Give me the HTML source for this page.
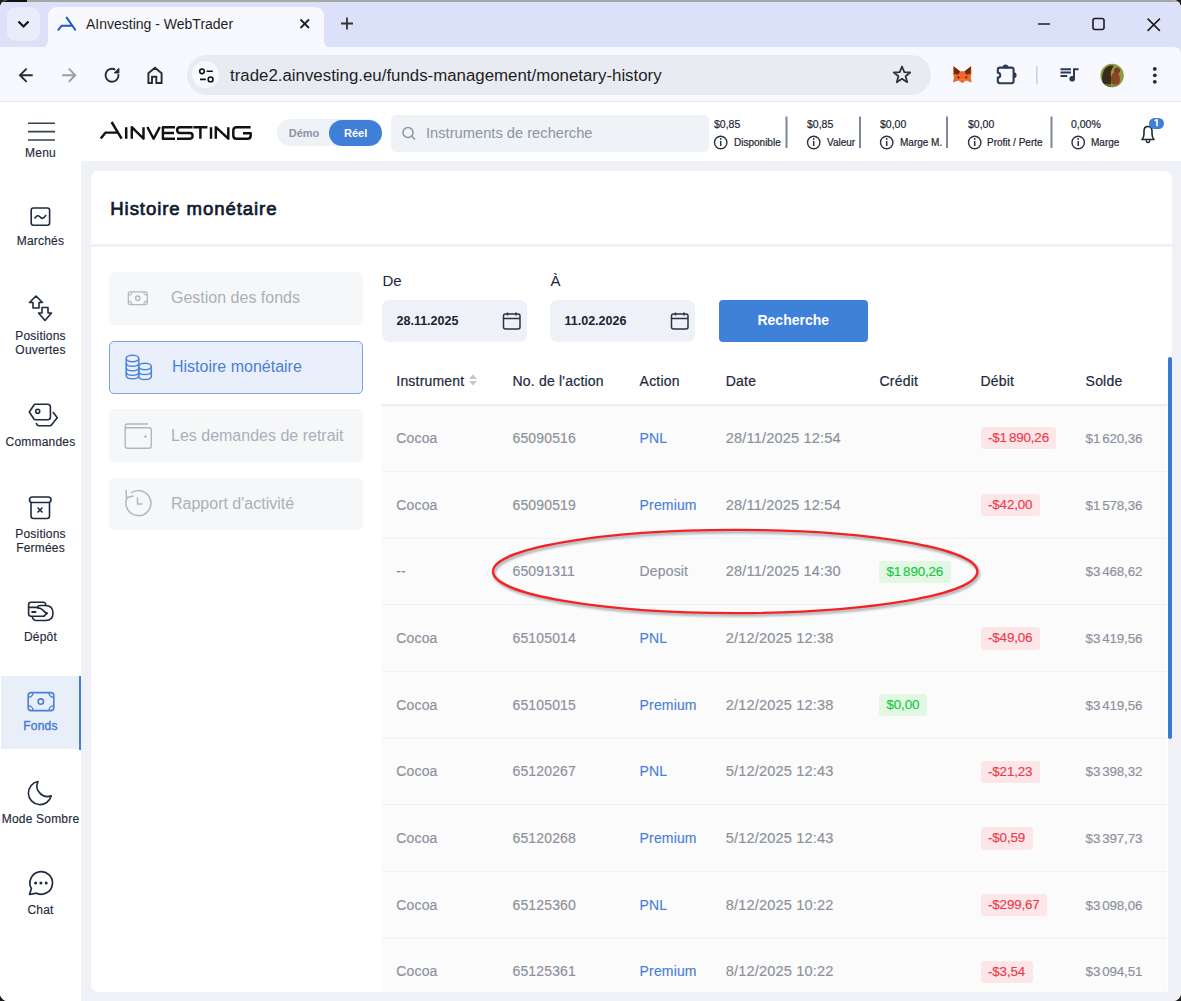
<!DOCTYPE html>
<html><head><meta charset="utf-8">
<style>
*{box-sizing:border-box;margin:0;padding:0}
html,body{width:1181px;height:1001px;overflow:hidden;background:#1c1c1c}
body{font-family:"Liberation Sans",sans-serif;position:relative}
.a{position:absolute}
svg{position:absolute;overflow:visible}
#win{position:absolute;left:0;top:0;width:1181px;height:1001px;overflow:hidden;border-radius:8px 8px 8px 8px;background:#fff}
#tabstrip{left:0;top:0;width:1181px;height:48px;background:#dae1f8;border-top:2px solid #8d8f94}
#toolbar{left:0;top:47px;width:1181px;height:55px;background:#f8f9fe;border-bottom:1px solid #e3e5ea}
#page{left:0;top:103px;width:1181px;height:898px;background:#eff3f9}
.t{white-space:nowrap;position:absolute}
.st{position:absolute;top:118px;-webkit-text-stroke:0.2px currentColor;font-size:10.5px;line-height:12px;color:#1d2433;white-space:nowrap}
.sl{position:absolute;top:137px;-webkit-text-stroke:0.2px currentColor;font-size:10px;line-height:12px;color:#1d2433;white-space:nowrap}
.mi{position:absolute;font-size:16px;line-height:18px;white-space:nowrap}
.th{position:absolute;top:373px;font-size:14px;line-height:17px;color:#1d2840;white-space:nowrap;letter-spacing:0.2px;-webkit-text-stroke:0.2px currentColor}
.td{position:absolute;font-size:14px;line-height:17px;color:#8b909b;white-space:nowrap;letter-spacing:0.15px;-webkit-text-stroke:0.15px currentColor}
.dt{font-size:14.6px}
.am{font-size:13.4px;letter-spacing:-0.15px}
.ts{display:inline-block;width:2px}
.bg,.br{position:absolute;height:22.4px;padding:0 7.5px;font-size:13.4px;letter-spacing:-0.15px;-webkit-text-stroke:0.15px currentColor;line-height:22.4px;border-radius:3px;white-space:nowrap}
.bg{background:#e3f7e5;color:#16c93b}
.br{background:#fde6e8;color:#ec3a4c}
.sb{position:absolute;left:0;width:81px;text-align:center;font-size:12px;line-height:14px;color:#1f2940;white-space:nowrap;margin-top:-1px;-webkit-text-stroke:0.15px currentColor;letter-spacing:0.2px}
</style></head>
<body>
<div id="win">
  <!-- TAB STRIP -->
  <div class="a" style="left:0;top:0;width:1181px;height:48px;background:#dae1f8"></div>
  <div class="a" style="left:0;top:0;width:1181px;height:2px;background:#a6a8a7"></div>
  <div class="a" style="left:0;top:0;width:27px;height:2px;background:#111"></div>
  <!-- dropdown btn -->
  <div class="a" style="left:7px;top:7px;width:33px;height:34px;border-radius:9px;background:#e9edfb"></div>
  <svg style="left:0;top:0" width="60" height="48"><path d="M18.5 21.5 L23.5 26.5 L28.5 21.5" fill="none" stroke="#111" stroke-width="2.2"/></svg>
  <!-- active tab -->
  <div class="a" style="left:48px;top:7px;width:276px;height:41px;border-radius:9px 9px 0 0;background:#f8f9fe"></div>
  <svg style="left:0;top:0" width="400" height="48">
    <path d="M40 48 Q48 48 48 40 L48 48 Z" fill="#f8f9fe"/>
    <path d="M324 40 Q324 48 332 48 L324 48 Z" fill="#f8f9fe"/>
    <path d="M58.3 29.8 L61.7 25.7 L71.8 25.7 M66.7 17.6 L75.2 29.8" fill="none" stroke="#1f5bc6" stroke-width="2" stroke-linecap="round" stroke-linejoin="round"/>
    <path d="M300.5 19.5 L309 28 M309 19.5 L300.5 28" stroke="#1f1f1f" stroke-width="1.8"/>
    <path d="M341 23.5 L353 23.5 M347 17.5 L347 29.5" stroke="#333" stroke-width="1.8"/>
    <path d="M1038 24 L1050 24" stroke="#1f1f1f" stroke-width="1.6"/>
    <rect x="1093" y="18.5" width="11" height="11" rx="2" fill="none" stroke="#1f1f1f" stroke-width="1.6"/>
    <path d="M1147.6 18.6 L1159.9 30.9 M1159.9 18.6 L1147.6 30.9" stroke="#1f1f1f" stroke-width="1.6"/>
  </svg>
  <div class="t" style="left:86px;top:16px;font-size:14px;color:#1f1f1f;line-height:16px">AInvesting - WebTrader</div>

  <!-- TOOLBAR -->
  <div class="a" style="left:0;top:47px;width:1181px;height:55px;background:#f8f9fe"></div>
  <div class="a" style="left:0;top:101px;width:1181px;height:1.5px;background:#e4e6eb"></div>
  <svg style="left:0;top:0" width="1181" height="60"><path d="M1174 47 L1181 47 L1181 54 Q1181 47 1174 47 Z" fill="#dae1f8"/></svg>
  <svg style="left:0;top:0" width="1181" height="110">
    <!-- back -->
    <path d="M32.7 75.2 L20 75.2 M26.6 68.6 L20 75.2 L26.6 81.8" fill="none" stroke="#262b36" stroke-width="1.9"/>
    <path d="M62.2 75.2 L75.2 75.2 M68.8 68.6 L75.2 75.2 L68.8 81.8" fill="none" stroke="#9a9da5" stroke-width="1.9"/>
    <!-- reload -->
    <path d="M118.4 74.2 A6.5 6.5 0 1 1 115.3 69.7" fill="none" stroke="#262b36" stroke-width="1.9"/>
    <path d="M114.3 73 L118.9 68.3 L118.9 73 Z" fill="#262b36" stroke="#262b36" stroke-width="1" stroke-linejoin="round"/>
    <!-- home -->
    <path d="M148.4 83 L148.4 73.3 L155 67.8 L161.6 73.3 L161.6 83 L156.3 83 L156.3 76.8 L152 76.8 L152 83 Z" fill="none" stroke="#262b36" stroke-width="1.9" stroke-linejoin="miter"/>
  </svg>
  <!-- omnibox -->
  <div class="a" style="left:187px;top:55px;width:744px;height:40px;border-radius:20px;background:#e9ebf3"></div>
  <div class="a" style="left:191.9px;top:61.3px;width:27.2px;height:27.2px;border-radius:14px;background:#f8f9fe"></div>
  <svg style="left:0;top:0" width="1181" height="110">
    <circle cx="202" cy="71.3" r="2.3" fill="none" stroke="#111" stroke-width="1.6"/>
    <path d="M206.6 71.3 L212.8 71.3 M200 79.4 L205.8 79.4" stroke="#111" stroke-width="1.6"/>
    <circle cx="210.6" cy="79.4" r="2.4" fill="none" stroke="#111" stroke-width="1.6"/>
    <!-- star -->
    <path d="M902 66.5 L904.3 72.2 L910.2 72.5 L905.6 76.3 L907.2 82.2 L902 78.8 L896.8 82.2 L898.4 76.3 L893.8 72.5 L899.7 72.2 Z" fill="none" stroke="#333" stroke-width="1.8" stroke-linejoin="round"/>
    <!-- fox -->
    <path d="M953.5 66.3 L960 71.2 L964.6 71.2 L971.1 66.3 L971.6 73.5 L970.6 77 L971.6 82.6 L966.2 80.6 L962.3 83 L958.4 80.6 L953 82.6 L954 77 L953 73.5 Z" fill="#f0662a"/>
    <path d="M953.5 66.3 L960 71.2 L958.5 74.5 L954.2 74 Z M971.1 66.3 L964.6 71.2 L966.1 74.5 L970.4 74 Z" fill="#6e2c0f"/>
    <path d="M957 76.2 L960 77.5 L958.2 78.4 Z M967.6 76.2 L964.6 77.5 L966.4 78.4 Z M961 80.3 L963.6 80.3 L962.3 82 Z" fill="#3a1a0a"/>
    <path d="M958.4 80.6 L962.3 78.5 L966.2 80.6 L962.3 83 Z" fill="#f58a4a" opacity=".6"/>
    <!-- puzzle -->
    <path d="M1000 67.6 L1011.4 67.6 Q1013.6 67.6 1013.6 69.8 L1013.6 81 Q1013.6 83.2 1011.4 83.2 L1000 83.2 Q997.8 83.2 997.8 81 L997.8 77.6 A2.4 2.4 0 0 0 997.8 72.8 L997.8 69.8 Q997.8 67.6 1000 67.6 Z" fill="none" stroke="#2b3a55" stroke-width="2.1" stroke-linejoin="round"/>
    <path d="M1003.2 67.6 A2.4 2.4 0 0 1 1008 67.6 Z M1013.6 72.8 A2.4 2.4 0 0 1 1013.6 77.6 Z" fill="#2b3a55" stroke="#2b3a55" stroke-width="1.2"/>
    <path d="M1036.8 66 L1036.8 84.5" stroke="#c6d4ef" stroke-width="1.6"/>
    <!-- media -->
    <path d="M1060.5 69.2 L1071 69.2 M1060.5 72.6 L1071 72.6 M1060.5 76.1 L1067.2 76.1" stroke="#2b3a55" stroke-width="2"/>
    <path d="M1074 79 L1074 69.2 L1078.6 69.2" fill="none" stroke="#2b3a55" stroke-width="2"/>
    <circle cx="1072.2" cy="78.8" r="2.8" fill="#2b3a55"/>
    <!-- avatar -->
    <defs><clipPath id="av"><circle cx="1112.1" cy="75.5" r="11.7"/></clipPath></defs>
    <circle cx="1112.1" cy="75.5" r="11.7" fill="#8e9c46"/>
    <g clip-path="url(#av)">
      <path d="M1104 87 Q1100 78 1104 70 Q1108 64 1114 66 Q1110 70 1111 77 Q1112 84 1110 88 Z" fill="#3a2a18"/>
      <ellipse cx="1115.5" cy="79" rx="4.5" ry="7" fill="#8a4522"/>
      <circle cx="1117" cy="70.5" r="3" fill="#7a3d1e"/>
      <path d="M1100 84 L1124 84 L1124 90 L1100 90 Z" fill="#7d8f3a" opacity=".7"/>
    </g>
    <!-- menu -->
    <circle cx="1154.8" cy="68.9" r="1.9" fill="#222b3b"/>
    <circle cx="1154.8" cy="75.3" r="1.9" fill="#222b3b"/>
    <circle cx="1154.8" cy="81.8" r="1.9" fill="#222b3b"/>
  </svg>
  <div class="t" style="left:230px;top:66px;font-size:16.85px;color:#1f1f1f;line-height:20px">trade2.ainvesting.eu/funds-management/monetary-history</div>
  <!-- WEB PAGE -->
  <div class="a" style="left:0;top:102px;width:1181px;height:899px;background:#eff1f6"></div>
  <!-- header -->
  <div class="a" style="left:0;top:102px;width:1181px;height:59px;background:#fff"></div>
  <!-- sidebar -->
  <div class="a" style="left:0;top:102px;width:81px;height:899px;background:#fff"></div>
  <div class="a" style="left:1px;top:676px;width:79px;height:73px;background:#e9eff9"></div>
  <div class="a" style="left:78.8px;top:675.5px;width:1.8px;height:74px;background:#3f7fd6"></div>
  <svg style="left:0;top:0" width="90" height="1001">
    <path d="M28 123.3 L55 123.3 M28 131.6 L55 131.6 M28 140 L55 140" stroke="#3a4150" stroke-width="1.6"/>
    <!-- marches -->
    <rect x="31.2" y="208" width="18.4" height="17.2" rx="2.2" fill="none" stroke="#1f2a3c" stroke-width="1.6"/>
    <path d="M35 218 Q37.5 214 40.2 217 Q42.5 220.5 45.8 215.4" fill="none" stroke="#1f2a3c" stroke-width="1.6" stroke-linecap="round"/>
    <!-- positions ouvertes -->
    <path d="M36 296 L29.5 302.5 L33 302.5 L33 308 L39 308 L39 302.5 L42.5 302.5 Z" fill="none" stroke="#1f2a3c" stroke-width="1.6" stroke-linejoin="round"/>
    <path d="M42 307.5 L42 313 L38.5 313 L45 320.5 L51.5 313 L48 313 L48 307.5 Z" fill="none" stroke="#1f2a3c" stroke-width="1.6" stroke-linejoin="round"/>
    <!-- commandes -->
    <g fill="none" stroke="#1f2a3c" stroke-width="1.6" stroke-linecap="round" stroke-linejoin="round">
      <path d="M34.9 404.3 L47.6 404.3 Q50.4 404.3 50.4 407.1 L50.4 417 Q50.4 419.8 47.6 419.8 L35.5 419.8 Q34.5 419.8 33.8 418.8 L29.3 412 L33.8 405.3 Q34.3 404.3 34.9 404.3 Z"/>
      <circle cx="37.7" cy="411.2" r="2"/>
      <path d="M36.4 423.5 Q37 425.7 39 425.7 L50 425.7 Q51 425.7 51.6 424.8 L57.3 417.7 L53.3 412.5"/>
    </g>
    <!-- positions fermees -->
    <rect x="29.5" y="497" width="21.5" height="5.5" rx="2.7" fill="none" stroke="#1f2a3c" stroke-width="1.6"/>
    <path d="M31 503 L31 516 Q31 518.5 33.5 518.5 L47 518.5 Q49.5 518.5 49.5 516 L49.5 503" fill="none" stroke="#1f2a3c" stroke-width="1.6"/>
    <path d="M37.5 507.5 L42.5 512.5 M42.5 507.5 L37.5 512.5" stroke="#1f2a3c" stroke-width="1.5"/>
    <!-- depot -->
    <g fill="none" stroke="#1f2a3c" stroke-width="1.6" stroke-linecap="round" stroke-linejoin="round">
      <path d="M45.9 605.1 Q45.5 602.2 43.5 602.2 L31 602.2 Q28.6 602.2 28.6 604.6 L28.6 613.8 Q28.6 616.2 31 616.2 L44.1 616.2"/>
      <path d="M28.6 607.4 L37.5 607.4"/>
      <path d="M37.5 607.4 Q38 605.5 40 605.5 L45.2 605.5 Q53 605.5 53 613 Q53 620.5 45.5 620.5 L36 620.5 Q33 620.5 32.2 616.7"/>
      <path d="M37.8 607.9 Q41 608 42.7 610 Q44.5 612.5 47.3 613.2 Q45 614.5 44.1 616.2"/>
      <path d="M32.2 612 L35.5 612" stroke-width="2"/>
    </g>
    <!-- fonds -->
    <g fill="none" stroke="#4a80d4" stroke-width="1.6">
      <rect x="28.2" y="692.6" width="25.6" height="18" rx="2.8"/>
      <circle cx="40.8" cy="701.6" r="2.7"/>
      <path d="M28.2 697.4 A4.8 4.8 0 0 0 33 692.6 M53.8 697.4 A4.8 4.8 0 0 1 49 692.6 M28.2 705.8 A4.8 4.8 0 0 1 33 710.6 M53.8 705.8 A4.8 4.8 0 0 0 49 710.6" stroke-width="1.4"/>
    </g>
    <!-- moon -->
    <path d="M37.98 781.58 A11.6 11.6 0 1 0 51.26 795.8 A10.5 10.5 0 0 1 37.98 781.58 Z" fill="none" stroke="#1f2a3c" stroke-width="1.6" stroke-linejoin="round"/>
    <!-- chat -->
    <path d="M36.4 893.2 A11.3 11.3 0 1 0 31.4 888.6 L29.5 894.5 Z" fill="none" stroke="#1f2a3c" stroke-width="1.7" stroke-linejoin="round"/>
    <circle cx="35.6" cy="883.1" r="1.5" fill="#1f2a3c"/>
    <circle cx="40.9" cy="883.1" r="1.5" fill="#1f2a3c"/>
    <circle cx="46.2" cy="883.1" r="1.5" fill="#1f2a3c"/>
  </svg>
  <!-- HEADER -->
  <svg style="left:0;top:0" width="260" height="160">
    <g fill="none" stroke="#111" stroke-width="2.45" stroke-linejoin="round">
      <path d="M100.8 138.6 L105.6 132.6 L117.5 132.6 M111.6 122 L121.6 138.6"/>
      <path d="M126.2 127.2 L126.2 138.7"/>
      <path d="M131.8 138.7 L131.8 127.2 L143.5 138.7 L143.5 127.2"/>
      <path d="M147.4 127 L153.6 138.7 L159.8 127"/>
      <path d="M175 127.2 L162.9 127.2 L162.9 138.7 L175 138.7 M162.9 133 L174 133"/>
      <path d="M192.6 127.2 L179.8 127.2 Q177.2 127.2 177.2 130 Q177.2 133 180 133 L190 133 Q192.6 133 192.6 135.8 Q192.6 138.7 190 138.7 L177 138.7"/>
      <path d="M193.4 127.2 L207.4 127.2 M200.4 127.2 L200.4 138.7"/>
      <path d="M211 127.2 L211 138.7"/>
      <path d="M215.8 138.7 L215.8 127.2 L228.3 138.7 L228.3 127.2"/>
      <path d="M250.6 127.2 L236.6 127.2 Q233.3 127.2 233.3 130.5 L233.3 135.4 Q233.3 138.7 236.6 138.7 L247.5 138.7 Q250.7 138.7 250.7 135.4 L250.7 133.2 L243 133.2"/>
    </g>
  </svg>
  <!-- toggle -->
  <div class="a" style="left:277px;top:119px;width:105px;height:27px;border-radius:14px;background:#eef1f6"></div>
  <div class="a" style="left:329px;top:119.5px;width:53px;height:26px;border-radius:13px;background:#3f7fd8"></div>
  <div class="t" style="left:288.7px;top:126px;font-size:11px;font-weight:bold;color:#8a94a6;line-height:14px">Démo</div>
  <div class="t" style="left:344px;top:126px;font-size:11px;font-weight:bold;color:#fff;line-height:14px">Réel</div>
  <!-- search -->
  <div class="a" style="left:391px;top:115px;width:318px;height:37px;border-radius:5px;background:#eff2f7"></div>
  <svg style="left:0;top:0" width="1181" height="160">
    <circle cx="408" cy="132.5" r="5" fill="none" stroke="#8a93a3" stroke-width="1.5"/>
    <path d="M411.8 136.3 L415 139.5" stroke="#8a93a3" stroke-width="1.5"/>
  </svg>
  <div class="t" style="left:426px;top:125px;font-size:14.7px;line-height:17px;color:#8d95a3">Instruments de recherche</div>
  <!-- stats -->
  <div class="st" style="left:714px">$0,85</div>
  <div class="st" style="left:807px">$0,85</div>
  <div class="st" style="left:880px">$0,00</div>
  <div class="st" style="left:968px">$0,00</div>
  <div class="st" style="left:1071px">0,00%</div>
  <div class="sl" style="left:734px">Disponible</div>
  <div class="sl" style="left:827px">Valeur</div>
  <div class="sl" style="left:900px">Marge M.</div>
  <div class="sl" style="left:987px">Profit / Perte</div>
  <div class="sl" style="left:1091px">Marge</div>
  <svg style="left:0;top:0" width="1181" height="160">
    <g fill="none" stroke="#2a3244" stroke-width="1.4">
      <circle cx="720.7" cy="142.5" r="6.2"/>
      <circle cx="813.7" cy="142.5" r="6.2"/>
      <circle cx="886.7" cy="142.5" r="6.2"/>
      <circle cx="974.7" cy="142.5" r="6.2"/>
      <circle cx="1078.2" cy="142.5" r="6.2"/>
    </g>
    <g stroke="#2a3244" stroke-width="1.5">
      <path d="M720.7 141 L720.7 146 M813.7 141 L813.7 146 M886.7 141 L886.7 146 M974.7 141 L974.7 146 M1078.2 141 L1078.2 146"/>
    </g>
    <g fill="#2a3244">
      <circle cx="720.7" cy="139" r=".9"/><circle cx="813.7" cy="139" r=".9"/><circle cx="886.7" cy="139" r=".9"/><circle cx="974.7" cy="139" r=".9"/><circle cx="1078.2" cy="139" r=".9"/>
    </g>
    <g stroke="#7d8799" stroke-width="2">
      <path d="M786.5 116.5 L786.5 148 M860 116.5 L860 148 M947 116.5 L947 148 M1051.5 116.5 L1051.5 148"/>
    </g>
    <!-- bell -->
    <path d="M1142 139.5 L1154 139.5 Q1152 137.5 1152 134 L1152 131 Q1152 126.5 1148 126.5 Q1144 126.5 1144 131 L1144 134 Q1144 137.5 1142 139.5 Z" fill="none" stroke="#1d2433" stroke-width="1.6" stroke-linejoin="round"/>
    <path d="M1146.3 140.3 Q1146.3 142.6 1148 142.6 Q1149.7 142.6 1149.7 140.3" fill="none" stroke="#1d2433" stroke-width="1.4"/>
  </svg>
  <div class="a" style="left:1149px;top:117.5px;width:15px;height:11px;border-radius:6px;background:#3f7fd8"></div>
  <svg style="left:0;top:0" width="1181" height="160"><path d="M1154.6 120.8 L1157 119.6 L1157 126.2" fill="none" stroke="#fff" stroke-width="1.6" stroke-linejoin="round"/></svg>
  <!-- CARD -->
  <div class="a" style="left:91px;top:170.5px;width:1080.5px;height:821.5px;border-radius:7px;background:#fff"></div>
  <div class="a" style="left:91px;top:243.5px;width:1080.5px;height:3px;background:#eef2f7"></div>
  <div class="t" style="left:110.3px;top:198px;font-size:18.6px;line-height:22px;color:#111a2e;letter-spacing:0.9px;-webkit-text-stroke:0.7px #111a2e">Histoire monétaire</div>
  <!-- left menu -->
  <div class="a" style="left:109px;top:272px;width:254px;height:52.5px;border-radius:5px;background:#f6f7f9"></div>
  <div class="a" style="left:108.5px;top:340.5px;width:254.5px;height:53px;border-radius:5px;background:#e9f0fb;border:1.6px solid #7aa5e6"></div>
  <div class="a" style="left:109px;top:409px;width:254px;height:52.5px;border-radius:5px;background:#f6f7f9"></div>
  <div class="a" style="left:109px;top:477.5px;width:254px;height:52.5px;border-radius:5px;background:#f6f7f9"></div>
  <div class="mi" style="left:171px;top:289px;color:#abafb9">Gestion des fonds</div>
  <div class="mi" style="left:172px;top:358px;color:#4a7fd4">Histoire monétaire</div>
  <div class="mi" style="left:171px;top:426.5px;color:#abafb9">Les demandes de retrait</div>
  <div class="mi" style="left:171px;top:495px;color:#abafb9">Rapport d'activité</div>
  <svg style="left:0;top:0" width="400" height="560">
    <!-- banknote -->
    <g fill="none" stroke="#b3b7c0" stroke-width="1.3">
      <rect x="128.3" y="291.8" width="19" height="12.8" rx="2"/>
      <circle cx="137.8" cy="298.2" r="2.2"/>
      <path d="M128.3 295.3 A3.5 3.5 0 0 0 131.8 291.8 M147.3 295.3 A3.5 3.5 0 0 1 143.8 291.8 M128.3 301.1 A3.5 3.5 0 0 1 131.8 304.6 M147.3 301.1 A3.5 3.5 0 0 0 143.8 304.6" stroke-width="1.1"/>
    </g>
    <!-- coins -->
    <g fill="none" stroke="#4f86d8" stroke-width="1.5">
      <ellipse cx="132.5" cy="358.5" rx="6.3" ry="3.2"/>
      <path d="M126.2 358.5 L126.2 375.5 Q126.2 378.8 132.5 378.8 Q138.8 378.8 138.8 375.5 L138.8 358.5"/>
      <path d="M126.2 363 Q126.2 366.3 132.5 366.3 Q138.8 366.3 138.8 363 M126.2 367.5 Q126.2 370.8 132.5 370.8 Q138.8 370.8 138.8 367.5 M126.2 372 Q126.2 375.3 132.5 375.3 Q138.8 375.3 138.8 372"/>
      <ellipse cx="145" cy="366.5" rx="6.3" ry="3.2"/>
      <path d="M138.8 366.5 L138.8 376.3 Q138.8 379.6 145 379.6 Q151.3 379.6 151.3 376.3 L151.3 366.5"/>
      <path d="M138.8 371.2 Q138.8 374.5 145 374.5 Q151.3 374.5 151.3 371.2"/>
    </g>
    <!-- wallet -->
    <g fill="none" stroke="#b3b7c0" stroke-width="1.4">
      <path d="M148 424 L127.5 424 Q125.2 424 125.2 426.3 L125.2 446 Q125.2 448.3 127.5 448.3 L149 448.3 Q151.3 448.3 151.3 446 L151.3 430 Q151.3 427.8 149 427.8 L125.2 427.8"/>
      <circle cx="145.5" cy="436.5" r=".6" fill="#b3b7c0"/>
    </g>
    <!-- history -->
    <g fill="none" stroke="#b3b7c0" stroke-width="1.5">
      <path d="M127.2 497.5 A12.5 12.5 0 1 0 131 493"/>
      <path d="M126 490 L126.5 497.8 L133.5 496"/>
      <path d="M137.5 497.5 L137.5 504 L142.5 504"/>
    </g>
  </svg>
  <!-- filters -->
  <div class="t" style="left:382.5px;top:272px;font-size:15px;line-height:18px;color:#1a2540">De</div>
  <div class="t" style="left:550.5px;top:272px;font-size:15px;line-height:18px;color:#1a2540">À</div>
  <div class="a" style="left:382px;top:300px;width:145px;height:41.5px;border-radius:7px;background:#eef2f8"></div>
  <div class="a" style="left:550px;top:300px;width:145px;height:41.5px;border-radius:7px;background:#eef2f8"></div>
  <div class="t" style="left:396.5px;top:314px;font-size:12.5px;line-height:15px;font-weight:bold;color:#1b2232">28.11.2025</div>
  <div class="t" style="left:564.5px;top:314px;font-size:12.5px;line-height:15px;font-weight:bold;color:#1b2232">11.02.2026</div>
  <svg style="left:0;top:0" width="1181" height="400">
    <g fill="none" stroke="#2b3140" stroke-width="1.5">
      <rect x="503.5" y="314" width="16.5" height="15" rx="2"/>
      <path d="M503.5 318.5 L520 318.5 M507.5 312.5 L507.5 315.5 M516 312.5 L516 315.5"/>
      <rect x="671.5" y="314" width="16.5" height="15" rx="2"/>
      <path d="M671.5 318.5 L688 318.5 M675.5 312.5 L675.5 315.5 M684 312.5 L684 315.5"/>
    </g>
  </svg>
  <div class="a" style="left:718.5px;top:299.5px;width:149.5px;height:42px;border-radius:4px;background:#3f80d8"></div>
  <div class="t" style="left:718.5px;top:312px;width:149.5px;text-align:center;font-size:14px;line-height:16px;font-weight:bold;color:#fff">Recherche</div>
  <!-- TABLE -->
  <div class="a" style="left:382px;top:403.5px;width:785px;height:588.5px;background:#fbfbfc;overflow:hidden">
    <div class="a" style="left:0;top:67.3px;width:785px;height:1px;background:#f0f1f4"></div>
    <div class="a" style="left:0;top:134.0px;width:785px;height:1px;background:#f0f1f4"></div>
    <div class="a" style="left:0;top:200.7px;width:785px;height:1px;background:#f0f1f4"></div>
    <div class="a" style="left:0;top:267.4px;width:785px;height:1px;background:#f0f1f4"></div>
    <div class="a" style="left:0;top:334.1px;width:785px;height:1px;background:#f0f1f4"></div>
    <div class="a" style="left:0;top:400.8px;width:785px;height:1px;background:#f0f1f4"></div>
    <div class="a" style="left:0;top:467.5px;width:785px;height:1px;background:#f0f1f4"></div>
    <div class="a" style="left:0;top:534.2px;width:785px;height:1px;background:#f0f1f4"></div>
    <div class="a" style="left:0;top:600.9px;width:785px;height:1px;background:#f0f1f4"></div>
  </div>
  <div class="a" style="left:382px;top:403.5px;width:785px;height:2.5px;background:#e8eef3"></div>
  <div class="th" style="left:396.3px">Instrument</div>
  <div class="th" style="left:512.5px">No. de l'action</div>
  <div class="th" style="left:639.6px">Action</div>
  <div class="th" style="left:725.8px">Date</div>
  <div class="th" style="left:879.5px">Crédit</div>
  <div class="th" style="left:980.5px">Débit</div>
  <div class="th" style="left:1085.6px">Solde</div>
  <svg style="left:0;top:0" width="500" height="400"><path d="M469 379 L473 374.3 L477 379 Z M469 381 L473 385.6 L477 381 Z" fill="#c3c7d0"/></svg>
  <div class="td" style="left:396.3px;top:429.8px">Cocoa</div>
  <div class="td" style="left:512.5px;top:429.8px">65090516</div>
  <div class="td" style="left:639.6px;top:429.8px;color:#4a7fd4">PNL</div>
  <div class="td dt" style="left:725.8px;top:429.8px">28/11/2025 12:54</div>
  <div class="br" style="left:980.5px;top:427.1px">-$1<span class="ts"></span>890,26</div>
  <div class="td am" style="left:1085.6px;top:429.8px">$1<span class="ts"></span>620,36</div>
  <div class="td" style="left:396.3px;top:496.5px">Cocoa</div>
  <div class="td" style="left:512.5px;top:496.5px">65090519</div>
  <div class="td" style="left:639.6px;top:496.5px;color:#4a7fd4">Premium</div>
  <div class="td dt" style="left:725.8px;top:496.5px">28/11/2025 12:54</div>
  <div class="br" style="left:980.5px;top:493.8px">-$42,00</div>
  <div class="td am" style="left:1085.6px;top:496.5px">$1<span class="ts"></span>578,36</div>
  <div class="td" style="left:396.3px;top:563.2px">--</div>
  <div class="td" style="left:512.5px;top:563.2px">65091311</div>
  <div class="td" style="left:639.6px;top:563.2px;color:#8b909b">Deposit</div>
  <div class="td dt" style="left:725.8px;top:563.2px">28/11/2025 14:30</div>
  <div class="bg" style="left:879px;top:560.5px">$1<span class="ts"></span>890,26</div>
  <div class="td am" style="left:1085.6px;top:563.2px">$3<span class="ts"></span>468,62</div>
  <div class="td" style="left:396.3px;top:629.9px">Cocoa</div>
  <div class="td" style="left:512.5px;top:629.9px">65105014</div>
  <div class="td" style="left:639.6px;top:629.9px;color:#4a7fd4">PNL</div>
  <div class="td dt" style="left:725.8px;top:629.9px">2/12/2025 12:38</div>
  <div class="br" style="left:980.5px;top:627.2px">-$49,06</div>
  <div class="td am" style="left:1085.6px;top:629.9px">$3<span class="ts"></span>419,56</div>
  <div class="td" style="left:396.3px;top:696.6px">Cocoa</div>
  <div class="td" style="left:512.5px;top:696.6px">65105015</div>
  <div class="td" style="left:639.6px;top:696.6px;color:#4a7fd4">Premium</div>
  <div class="td dt" style="left:725.8px;top:696.6px">2/12/2025 12:38</div>
  <div class="bg" style="left:879px;top:693.9px">$0,00</div>
  <div class="td am" style="left:1085.6px;top:696.6px">$3<span class="ts"></span>419,56</div>
  <div class="td" style="left:396.3px;top:763.3px">Cocoa</div>
  <div class="td" style="left:512.5px;top:763.3px">65120267</div>
  <div class="td" style="left:639.6px;top:763.3px;color:#4a7fd4">PNL</div>
  <div class="td dt" style="left:725.8px;top:763.3px">5/12/2025 12:43</div>
  <div class="br" style="left:980.5px;top:760.6px">-$21,23</div>
  <div class="td am" style="left:1085.6px;top:763.3px">$3<span class="ts"></span>398,32</div>
  <div class="td" style="left:396.3px;top:830.0px">Cocoa</div>
  <div class="td" style="left:512.5px;top:830.0px">65120268</div>
  <div class="td" style="left:639.6px;top:830.0px;color:#4a7fd4">Premium</div>
  <div class="td dt" style="left:725.8px;top:830.0px">5/12/2025 12:43</div>
  <div class="br" style="left:980.5px;top:827.3px">-$0,59</div>
  <div class="td am" style="left:1085.6px;top:830.0px">$3<span class="ts"></span>397,73</div>
  <div class="td" style="left:396.3px;top:896.7px">Cocoa</div>
  <div class="td" style="left:512.5px;top:896.7px">65125360</div>
  <div class="td" style="left:639.6px;top:896.7px;color:#4a7fd4">PNL</div>
  <div class="td dt" style="left:725.8px;top:896.7px">8/12/2025 10:22</div>
  <div class="br" style="left:980.5px;top:894.0px">-$299,67</div>
  <div class="td am" style="left:1085.6px;top:896.7px">$3<span class="ts"></span>098,06</div>
  <div class="td" style="left:396.3px;top:963.4px">Cocoa</div>
  <div class="td" style="left:512.5px;top:963.4px">65125361</div>
  <div class="td" style="left:639.6px;top:963.4px;color:#4a7fd4">Premium</div>
  <div class="td dt" style="left:725.8px;top:963.4px">8/12/2025 10:22</div>
  <div class="br" style="left:980.5px;top:960.7px">-$3,54</div>
  <div class="td am" style="left:1085.6px;top:963.4px">$3<span class="ts"></span>094,51</div>
  <div class="a" style="left:1168px;top:357px;width:3.5px;height:635px;background:#eff1f6"></div>
  <div class="a" style="left:1168px;top:357px;width:3.5px;height:382px;border-radius:2px;background:#3a78d6"></div>
  <svg style="left:0;top:0" width="1181" height="1001">
    <defs><filter id="sh" x="-10%" y="-50%" width="120%" height="200%"><feGaussianBlur stdDeviation="1.2"/></filter></defs>
    <ellipse cx="736.5" cy="573.6" rx="242.2" ry="41.6" fill="none" stroke="#9aa3a8" stroke-width="3" opacity=".8" filter="url(#sh)"/>
    <ellipse cx="735.2" cy="571.5" rx="242.2" ry="41.6" fill="none" stroke="#f42222" stroke-width="2.3"/>
  </svg>
  <div class="sb" style="top:147px">Menu</div>
  <div class="sb" style="top:235px">Marchés</div>
  <div class="sb" style="top:330px;line-height:14px">Positions<br>Ouvertes</div>
  <div class="sb" style="top:436px">Commandes</div>
  <div class="sb" style="top:528px;line-height:14px">Positions<br>Fermées</div>
  <div class="sb" style="top:631px">Dépôt</div>
  <div class="sb" style="top:720px;color:#4a80d4;-webkit-text-stroke:0.45px #4a80d4">Fonds</div>
  <div class="sb" style="top:813px">Mode Sombre</div>
  <div class="sb" style="top:904px">Chat</div>
</div>
</body></html>
